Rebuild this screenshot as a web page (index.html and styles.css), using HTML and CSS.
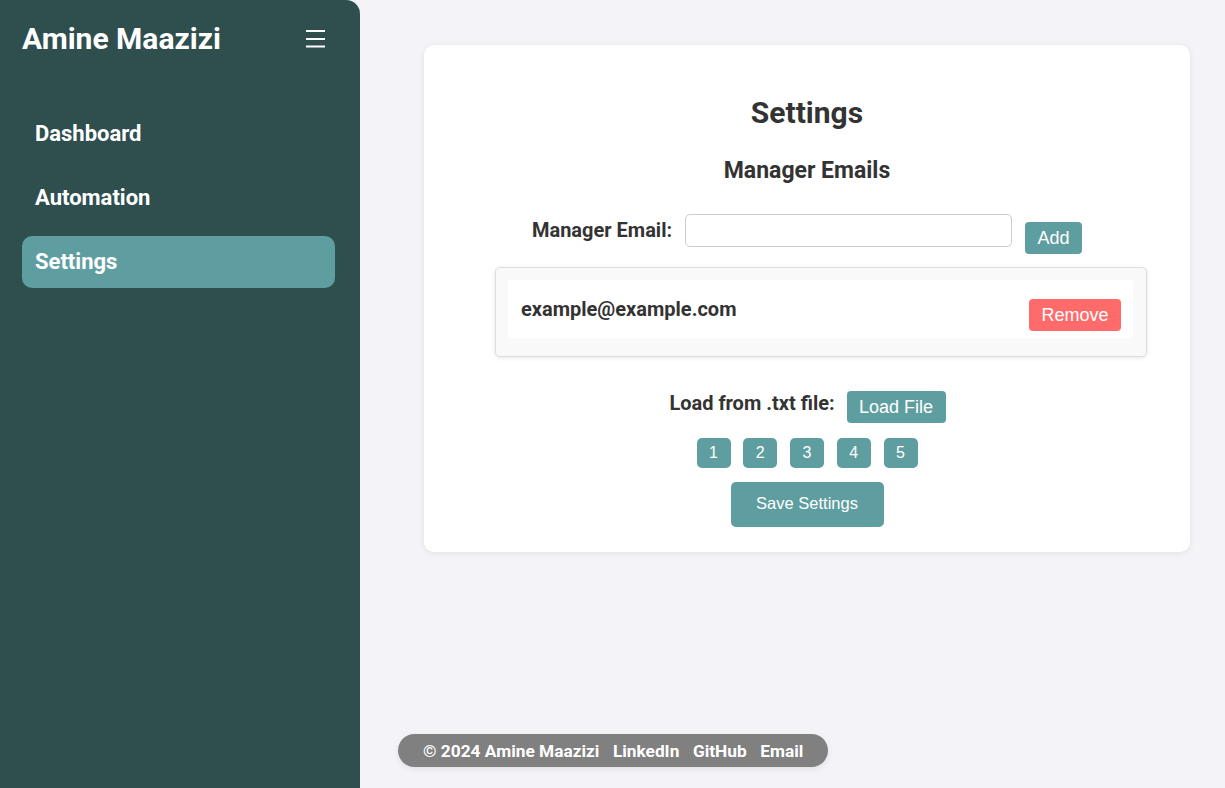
FILE: index.html
```html
<!DOCTYPE html>
<html>
<head>
<meta charset="utf-8">
<link rel="stylesheet" href="styles.css">
</head>
<body>
<div class="app">
  <aside class="sidebar">
    <div class="brand">
      <span class="brand-name">Amine Maazizi</span>
      <svg class="menu-icon" width="19" height="19" viewBox="0 0 19 19" aria-label="menu">
        <rect x="0" y="1" width="19" height="2" fill="#fff"/>
        <rect x="0" y="9" width="19" height="2" fill="#fff"/>
        <rect x="0" y="16.5" width="19" height="2" fill="#fff"/>
      </svg>
    </div>
    <nav class="nav">
      <a class="nav-item">Dashboard</a>
      <a class="nav-item">Automation</a>
      <a class="nav-item active">Settings</a>
    </nav>
  </aside>
  <main class="main">
    <section class="card">
      <h1 class="title">Settings</h1>
      <h2 class="subtitle">Manager Emails</h2>
      <div class="email-row">
        <label class="label">Manager Email:</label>
        <input class="email-input" type="text">
        <button class="btn btn-add">Add</button>
      </div>
      <div class="email-list">
        <div class="email-item">
          <span class="email-text">example@example.com</span>
          <button class="btn btn-remove">Remove</button>
        </div>
      </div>
      <div class="load-row">
        <span class="label">Load from .txt file:</span>
        <button class="btn btn-load">Load File</button>
      </div>
      <div class="pages">
        <button class="btn btn-page">1</button>
        <button class="btn btn-page">2</button>
        <button class="btn btn-page">3</button>
        <button class="btn btn-page">4</button>
        <button class="btn btn-page">5</button>
      </div>
      <div class="save-row">
        <button class="btn btn-save">Save Settings</button>
      </div>
    </section>
    <footer class="footer">
      <span>© 2024 Amine Maazizi</span>
      <a>LinkedIn</a>
      <a>GitHub</a>
      <a>Email</a>
    </footer>
  </main>
</div>
</body>
</html>
```

FILE: styles.css
```css
* { box-sizing: border-box; }
html, body { margin: 0; padding: 0; height: 100%; }
body {
  font-family: Roboto, "Noto Sans", sans-serif;
  background: #f4f4f8;
  color: #333;
}
.app { display: flex; height: 788px; }
.sidebar {
  width: 360px;
  flex: none;
  background: #2f4f4f;
  border-radius: 0 14px 0 0;
  padding: 0 25px 0 22px;
  color: #fff;
}
.brand {
  display: flex;
  justify-content: space-between;
  align-items: center;
  height: 78px;
  padding-bottom: 2px;
}
.brand-name { font-size: 30px; font-weight: 700; }
.menu-icon { display: block; margin-right: 10px; margin-top: 1px; }
.nav { display: flex; flex-direction: column; gap: 12px; margin-top: 30px; }
.nav-item {
  display: block;
  height: 52px;
  line-height: 52px;
  padding: 0 13px;
  font-size: 22px;
  font-weight: 700;
  border-radius: 10px;
  color: #fff;
}
.nav-item.active { background: #5f9ea0; }
.main {
  flex: 1;
  min-width: 0;
  position: relative;
  padding: 45px 35px 0 64px;
}
.card {
  background: #fff;
  border-radius: 10px;
  box-shadow: 0 1px 6px rgba(0,0,0,0.08);
  padding: 50px 20px 25px;
  height: 507px;
  display: flex;
  flex-direction: column;
  align-items: center;
}
.title { margin: 0; font-size: 30px; font-weight: 700; line-height: 35px; }
.subtitle { margin: 27px 0 0; font-size: 23px; font-weight: 700; line-height: 27px; }
.email-row { display: flex; align-items: flex-start; margin-top: 30px; height: 40px; }
.label { font-size: 20px; font-weight: 700; line-height: 24px; }
.email-row .label { margin-top: 4px; margin-right: 13px; }
.email-input {
  width: 327px; height: 33px;
  border: 1px solid #ccc; border-radius: 5px;
  margin: 0; padding: 0 8px;
}
.btn {
  font-family: "Liberation Sans", Arial, sans-serif;
  font-size: 18px;
  line-height: 20px;
  color: #fff;
  background: #5f9ea0;
  border: none;
  border-radius: 4px;
  padding: 6px 12px;
  margin: 0;
}
.btn-add { margin-left: 13px; margin-top: 8px; width: 57px; padding: 6px 0; }
.email-list {
  margin-top: 13px;
  margin-left: 28px;
  width: 652px;
  flex: none;
  background: #f9f9f9;
  border: 1px solid #ddd;
  border-radius: 5px;
  box-shadow: 0 1px 4px rgba(0,0,0,0.1);
  padding: 12px 13px 18px 12px;
}
.email-item {
  background: #fff;
  height: 58px;
  display: flex;
  justify-content: space-between;
  align-items: flex-start;
  padding: 0 12px 0 13px;
  border-radius: 3px;
}
.email-text { font-size: 20px; font-weight: 700; line-height: 24px; margin-top: 17px; }
.btn-remove { background: #ff6b6b; margin-top: 19px; width: 92px; padding: 6px 0; }
.load-row { display: flex; align-items: flex-start; margin-top: 34px; margin-left: 1px; }
.load-row .label { margin-top: 0; margin-right: 12px; }
.btn-load { width: 99px; padding: 6px 0; }
.pages { display: flex; gap: 12.75px; margin-top: 15px; }
.btn-page { width: 34px; height: 30px; padding: 0; font-size: 16px; line-height: 30px; border-radius: 5px; }
.save-row { margin-top: 14px; }
.btn-save { width: 153px; height: 45px; padding: 0 0 3px; font-size: 16.5px; border-radius: 5px; }
.footer {
  position: absolute;
  left: 38px;
  bottom: 21px;
  height: 33px;
  background: #808080;
  border-radius: 17px;
  box-shadow: 0 2px 6px rgba(0,0,0,0.08);
  padding: 0 25px;
  display: flex;
  align-items: center;
  gap: 13.5px;
  color: #fff;
  font-size: 17.3px;
  font-weight: 700;
}
.footer a { color: #fff; }
```
